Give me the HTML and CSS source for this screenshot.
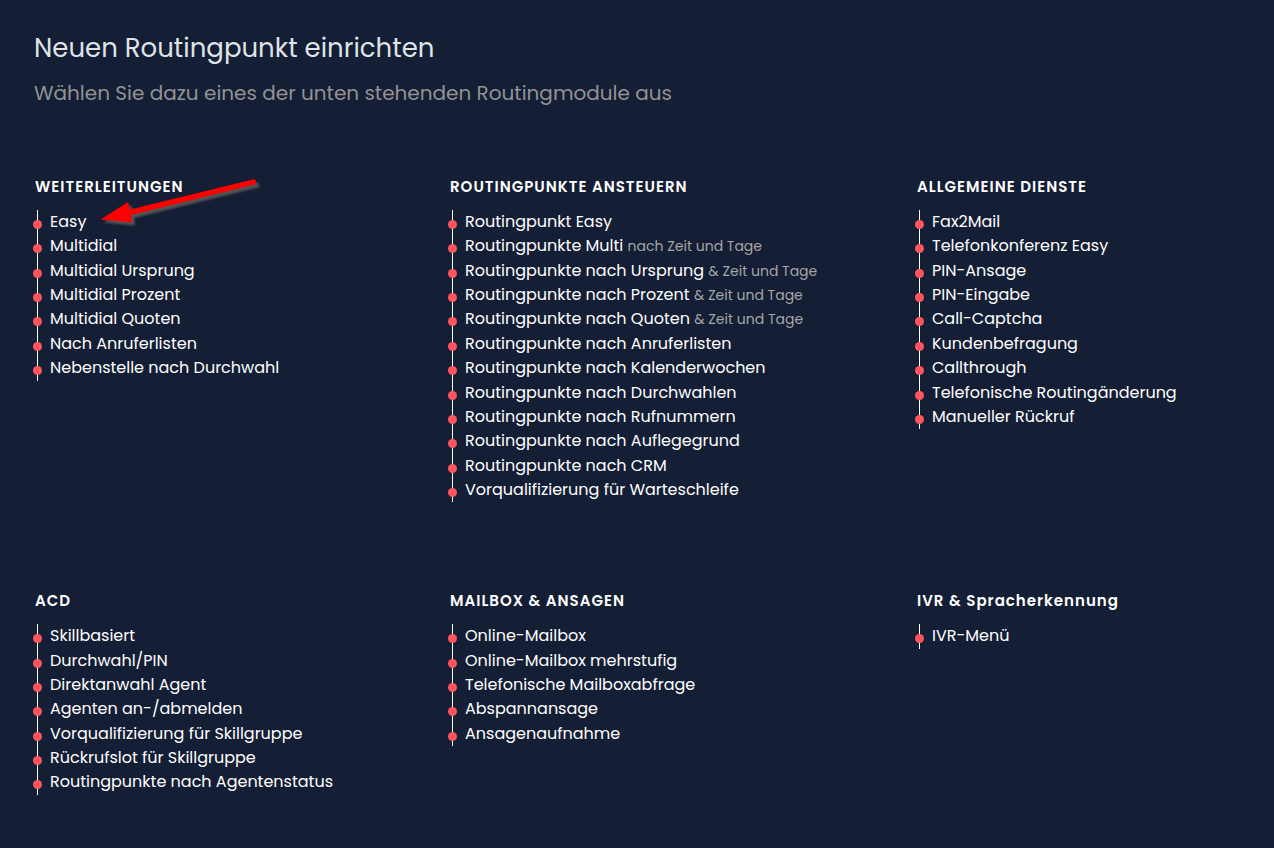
FILE: index.html
```
<!DOCTYPE html>
<html lang="de">
<head>
<meta charset="utf-8">
<title>Neuen Routingpunkt einrichten</title>
<link rel="stylesheet" href="styles.css">
</head>
<body>
<main class="page">
  <header class="intro">
    <h1 class="title">Neuen Routingpunkt einrichten</h1>
    <p class="subtitle">Wählen Sie dazu eines der unten stehenden Routingmodule aus</p>
  </header>
  <div class="modules">
    <section class="group">
      <h2 class="group-title">WEITERLEITUNGEN</h2>
      <ul class="list">
        <li><a href="#">Easy</a></li>
        <li><a href="#">Multidial</a></li>
        <li><a href="#">Multidial Ursprung</a></li>
        <li><a href="#">Multidial Prozent</a></li>
        <li><a href="#">Multidial Quoten</a></li>
        <li><a href="#">Nach Anruferlisten</a></li>
        <li><a href="#">Nebenstelle nach Durchwahl</a></li>
      </ul>
      <svg class="pointer" width="170" height="60" viewBox="0 0 170 60" aria-hidden="true">
        <path d="M3.5 49.5 31 32 33 39.5 158 9 159.5 14 34 45 35 52.5Z" fill="#ff0000"/>
      </svg>
    </section>
    <section class="group">
      <h2 class="group-title">ROUTINGPUNKTE ANSTEUERN</h2>
      <ul class="list">
        <li><a href="#">Routingpunkt Easy</a></li>
        <li><a href="#">Routingpunkte Multi <span class="note">nach Zeit und Tage</span></a></li>
        <li><a href="#">Routingpunkte nach Ursprung <span class="note">&amp; Zeit und Tage</span></a></li>
        <li><a href="#">Routingpunkte nach Prozent <span class="note">&amp; Zeit und Tage</span></a></li>
        <li><a href="#">Routingpunkte nach Quoten <span class="note">&amp; Zeit und Tage</span></a></li>
        <li><a href="#">Routingpunkte nach Anruferlisten</a></li>
        <li><a href="#">Routingpunkte nach Kalenderwochen</a></li>
        <li><a href="#">Routingpunkte nach Durchwahlen</a></li>
        <li><a href="#">Routingpunkte nach Rufnummern</a></li>
        <li><a href="#">Routingpunkte nach Auflegegrund</a></li>
        <li><a href="#">Routingpunkte nach CRM</a></li>
        <li><a href="#">Vorqualifizierung für Warteschleife</a></li>
      </ul>
    </section>
    <section class="group">
      <h2 class="group-title">ALLGEMEINE DIENSTE</h2>
      <ul class="list">
        <li><a href="#">Fax2Mail</a></li>
        <li><a href="#">Telefonkonferenz Easy</a></li>
        <li><a href="#">PIN-Ansage</a></li>
        <li><a href="#">PIN-Eingabe</a></li>
        <li><a href="#">Call-Captcha</a></li>
        <li><a href="#">Kundenbefragung</a></li>
        <li><a href="#">Callthrough</a></li>
        <li><a href="#">Telefonische Routingänderung</a></li>
        <li><a href="#">Manueller Rückruf</a></li>
      </ul>
    </section>
    <section class="group">
      <h2 class="group-title">ACD</h2>
      <ul class="list">
        <li><a href="#">Skillbasiert</a></li>
        <li><a href="#">Durchwahl/PIN</a></li>
        <li><a href="#">Direktanwahl Agent</a></li>
        <li><a href="#">Agenten an-/abmelden</a></li>
        <li><a href="#">Vorqualifizierung für Skillgruppe</a></li>
        <li><a href="#">Rückrufslot für Skillgruppe</a></li>
        <li><a href="#">Routingpunkte nach Agentenstatus</a></li>
      </ul>
    </section>
    <section class="group">
      <h2 class="group-title">MAILBOX &amp; ANSAGEN</h2>
      <ul class="list">
        <li><a href="#">Online-Mailbox</a></li>
        <li><a href="#">Online-Mailbox mehrstufig</a></li>
        <li><a href="#">Telefonische Mailboxabfrage</a></li>
        <li><a href="#">Abspannansage</a></li>
        <li><a href="#">Ansagenaufnahme</a></li>
      </ul>
    </section>
    <section class="group">
      <h2 class="group-title">IVR &amp; Spracherkennung</h2>
      <ul class="list">
        <li><a href="#">IVR-Menü</a></li>
      </ul>
    </section>
  </div>
</main>
</body>
</html>
```
FILE: styles.css
```
* { box-sizing: border-box; }
body {
  margin: 0;
  background: #141e35;
  color: #fff;
  font-family: Poppins, Inter, "Open Sans", sans-serif;
  font-size: 16px;
}
.page { padding: 28px 34px 52px; }
.title {
  margin: 0;
  font-size: 26px;
  line-height: 40px;
  font-weight: 400;
  color: #dfe3e6;
}
.subtitle {
  margin: 10px 0 0;
  font-size: 20px;
  line-height: 30px;
  color: #939393;
}
.modules {
  margin-top: 66px;
  padding: 0 1px;
  display: grid;
  grid-template-columns: 415fr 467fr 322fr;
  row-gap: 86px;
}
.group { position: relative; }
.group-title {
  margin: 0 0 10px;
  font-size: 15px;
  line-height: 26px;
  font-weight: 600;
  letter-spacing: 1px;
}
.list {
  margin: 0;
  padding: 0;
  list-style: none;
  line-height: 1.523;
}
.list li {
  position: relative;
  padding-left: 15px;
  white-space: nowrap;
}
.list li::before {
  content: "";
  position: absolute;
  left: 2px;
  top: 0;
  bottom: 0;
  width: 1px;
  background: #fff;
}
.list li::after {
  content: "";
  position: absolute;
  left: -2px;
  top: 10px;
  width: 9px;
  height: 9px;
  border-radius: 50%;
  background: #ff565c;
}
.list a { color: inherit; text-decoration: none; }
.note { font-size: 14px; line-height: 1; color: #a6a6a6; }
.pointer {
  position: absolute;
  left: 62px;
  top: -4px;
  filter: drop-shadow(3px 3px 1px #555);
  pointer-events: none;
}
```
